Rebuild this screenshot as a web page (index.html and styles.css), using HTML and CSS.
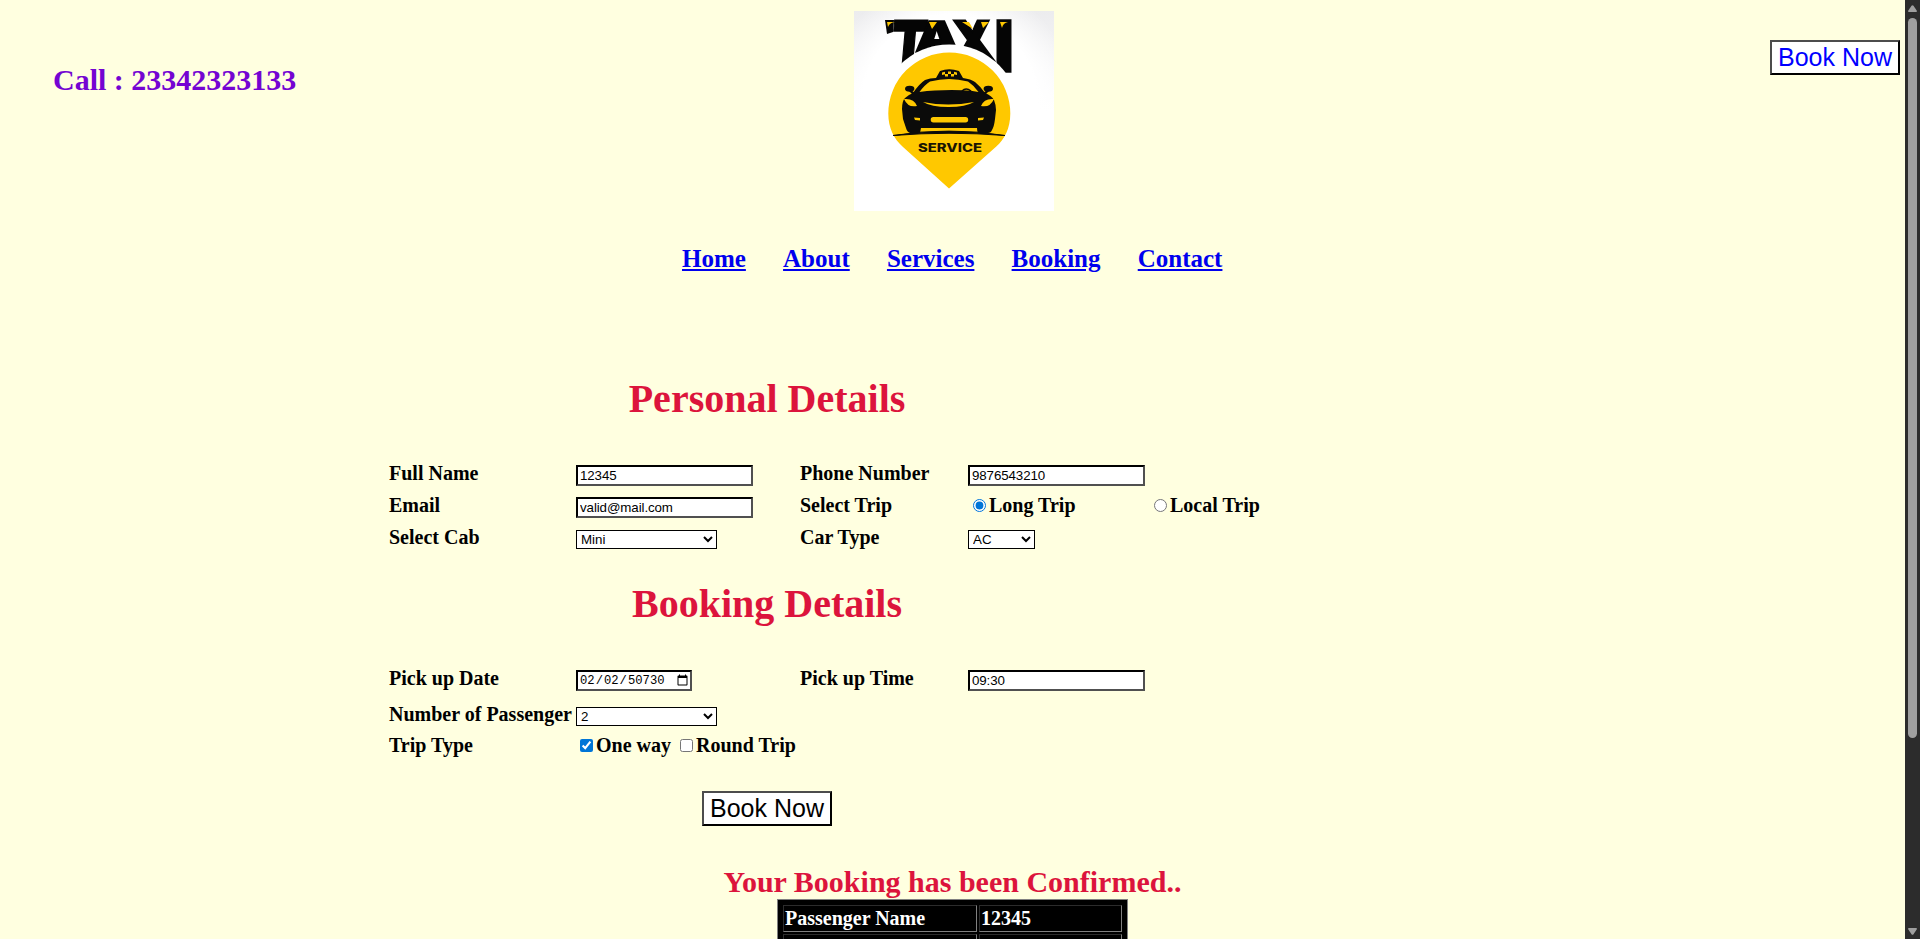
FILE: index.html
```html
<!DOCTYPE html>
<html lang="en-US">
<head>
<meta charset="utf-8">
<title>Taxi Service</title>
<link rel="stylesheet" href="styles.css">
</head>
<body>
<main class="page">
  <header class="header">
    <div class="call">Call : 23342323133</div>
    <svg class="logo" viewBox="0 0 200 200" role="img">
      <defs>
        <linearGradient id="paper" x1="0" y1="0" x2="0" y2="1">
          <stop offset="0" stop-color="#ececee"/>
          <stop offset=".5" stop-color="#fff"/>
        </linearGradient>
        <radialGradient id="glow" cx=".48" cy=".45" r=".62">
          <stop offset=".7" stop-color="#fff"/>
          <stop offset="1" stop-color="#fff" stop-opacity="0"/>
        </radialGradient>
      </defs>
      <rect width="200" height="200" fill="url(#paper)"/>
      <rect width="200" height="200" fill="url(#glow)"/>
      <g class="logo-word">
        <text transform="translate(35 58) skewX(-5)" textLength="36" lengthAdjust="spacingAndGlyphs" font-size="67" stroke-width="3">T</text>
        <text x="61" y="41" textLength="44" lengthAdjust="spacingAndGlyphs" font-size="43">A</text>
        <text transform="translate(101 50) skewX(6)" textLength="41" lengthAdjust="spacingAndGlyphs" font-size="56">X</text>
        <text x="140" y="61" textLength="20" lengthAdjust="spacingAndGlyphs" font-size="71">I</text>
      </g>
      <path d="M31 9h9l-1 12-6 2z" fill="#050505"/>
      <circle cx="95.3" cy="104" r="70.500" fill="#fff"/>
      <g fill="#ffc800">
        <path d="M33 11h9q-6 0-8 5zM75 11h8l-5 7zM108 11h7l4 7zM127 11h8l-6 6zM146 11h8q-5 1-6 6z"/>
        <path d="M95.300 41.500a61 61 0 0 1 61 61c0 15-6 26-14 33L95 177.500 49 136c-9-8-14.700-19-14.700-33.500a61 61 0 0 1 61-61z"/>
      </g>
      <g fill="#0b0b0a">
        <path d="M39 124.500Q95 115.500 151 124.500Q95 120 39 124.500z" stroke="#0b0b0a"/>
        <path d="M82 67l4-7q9-3.500 19 0l4 7q8 1 12 4 5 4 10 11 7 3 9 7 2 5 2 10l-1 9q-1 8-3 11-1 3-4 3h-10q-1-2-1-5H67l-1 5H56q-3-1-4-5l-3-9-1-10q0-8 3-11 3-3 8-5 6-9 12-13 5-2 11-2z"/>
        <ellipse cx="55.700" cy="77.800" rx="4.700" ry="3"/>
        <ellipse cx="134.300" cy="77.800" rx="4.700" ry="3"/>
        <path d="M57 79l4 3-2 2-4-4zM133 79l-4 3 2 2 4-4z"/>
      </g>
      <g fill="#ffc800">
        <path d="M65.500 81q5-7 10.500-10.500 19-5 38 0 6 4 10.500 10.500-7-1.500-16-1.800-24-.8-43 1.800z"/>
        <path d="M50 88q10-1 13 7-9 2-13-7zM140 88q-10-1-13 7 9 2 13-7z"/>
        <path d="M69 91q25 5 51 0-8 5-25.500 5T69 91z"/>
        <rect x="76.700" y="106" width="37.500" height="5.500" rx="2.700"/>
        <path d="M60 106.500l6 .5v2.500l-5-.5zM130 106.500l-6 .5v2.500l5-.5z"/>
        <path d="M67 117h55.500v2.300H67zM88 61.500l3-.8v2.500l-3 .8zM94 60.500h3V63h-3zM100 60.700l3 .8V64l-3-.8zM91 63h3v2.500h-3zM97 63h3v2.500h-3z"/>
      </g>
      <path d="M108 80q4-4 9 0" fill="none" stroke="#0b0b0a" stroke-width="1.500"/>
      <text class="logo-service" x="64" y="141" textLength="64" lengthAdjust="spacingAndGlyphs">SERVICE</text>
    </svg>
    <button class="book book-top">Book Now</button>
  </header>

  <nav class="nav">
    <a href="#">Home</a><a href="#">About</a><a href="#">Services</a><a href="#">Booking</a><a href="#">Contact</a>
  </nav>

  <form class="form">
    <h1 class="title">Personal Details</h1>
    <div class="fields personal">
      <label>Full Name</label><input class="text" type="text" value="12345">
      <label>Phone Number</label><input class="text" type="text" value="9876543210"><span></span>
      <label>Email</label><input class="text" type="text" value="valid@mail.com">
      <label>Select Trip</label>
      <label class="option radio"><input type="radio" name="trip" checked>Long Trip</label>
      <label class="option radio local"><input type="radio" name="trip">Local Trip</label>
      <label>Select Cab</label><select class="wide"><option>Mini</option></select>
      <label>Car Type</label><select class="narrow"><option>AC</option></select><span></span>
    </div>
    <h1 class="title title-booking">Booking Details</h1>
    <div class="fields booking">
      <label>Pick up Date</label><input class="date" type="date" value="50730-02-02">
      <label>Pick up Time</label><input class="text" type="text" value="09:30"><span></span>
      <label>Number of Passenger</label><select class="wide"><option>2</option></select><span></span><span></span><span></span>
      <label>Trip Type</label>
      <div class="checks">
        <label class="option"><input type="checkbox" checked>One way</label>
        <label class="option"><input type="checkbox">Round Trip</label>
      </div>
    </div>
    <button class="book book-form" type="button">Book Now</button>
  </form>

  <section class="result">
    <h2 class="confirmed">Your Booking has been Confirmed..</h2>
    <table class="summary">
      <tr><td class="key">Passenger Name</td><td class="value">12345</td></tr>
      <tr><td class="key">&nbsp;</td><td class="value">&nbsp;</td></tr>
    </table>
  </section>
</main>
<aside class="scrollbar">
  <svg width="9" height="8" viewBox="0 0 9 8"><path d="M3.500.8Q4.500-.5 5.500.8L9 6Q9 7 8 7H1Q0 7 0 6z" fill="#9f9f9f"/></svg>
  <div class="thumb"></div>
  <svg class="down" width="9" height="8" viewBox="0 0 9 8"><path d="M3.500 6.200Q4.500 7.500 5.500 6.200L9 1Q9 0 8 0H1Q0 0 0 1z" fill="#9f9f9f"/></svg>
</aside>
</body>
</html>
```
FILE: styles.css
```css
* { box-sizing: border-box; }

body {
  margin: 0;
  height: 939px;
  display: flex;
  overflow: hidden;
  background: #ffffe0;
  font-family: "Liberation Serif", "Times New Roman", serif;
  font-weight: bold;
}

.page { width: 1905px; height: 939px; overflow: hidden; }

.header {
  display: grid;
  grid-template-columns: 801px 200px 846px;
  padding: 11px 5px 0 53px;
  height: 211px;
  align-items: start;
}
.call { margin-top: 52px; font-size: 30px; line-height: 34px; color: #7404d2; }
.logo { display: block; width: 200px; height: 200px; }
.logo-word text {
  font-family: Inter, "Open Sans", sans-serif;
  font-weight: 900;
  fill: #050505;
  stroke: #050505;
  stroke-width: 1.5;
}
.logo-service { font-family: Inter, sans-serif; font-weight: 800; font-size: 11.5px; fill: #1a1503; }

.book {
  width: 130px;
  height: 35px;
  padding: 1px 6px;
  border: 2px outset #000;
  border-color: #4c4c4c #000 #000 #4c4c4c;
  background: #fff;
  color: #000;
  font: 25px "Liberation Sans", Arial, sans-serif;
  line-height: 29px;
  white-space: nowrap;
}
.book-top { margin-top: 29px; justify-self: end; color: #00f; }

.nav {
  display: flex;
  gap: 37.2px;
  padding: 34px 0 0 682px;
  font-size: 25px;
  line-height: 28px;
}
.nav a { color: #00e; }

.form { padding-left: 389px; }
.title {
  width: 756px;
  margin: 103px 0 0;
  text-align: center;
  font-size: 40px;
  line-height: 46px;
  color: #dc143c;
}
.title-booking { margin-top: 28px; }
.fields {
  display: grid;
  grid-template-columns: 187px 224px 168px 186px 160px;
  font-size: 20px;
  line-height: 32px;
  white-space: nowrap;
  align-items: start;
}
.personal { margin-top: 35px; grid-template-rows: 32px 32px 32px; }
.booking { margin-top: 35px; grid-template-rows: 36px 31px 32px; }

.text, .date {
  width: 177px;
  height: 21px;
  margin: 8px 0 0;
  padding: 1px 2px;
  border: 2px solid #000;
  border-color: #000 #505050 #505050 #000;
  background: #fff;
  color: #000;
  font: 13.333px "Liberation Sans", Arial, sans-serif;
}
.text { letter-spacing: -0.1px; }
.date { width: 116px; padding: 1px; font-family: "Liberation Mono", monospace; font-size: 12.2px; }
.date::-webkit-calendar-picker-indicator { margin-left: 8px; width: 13px; height: 13px; padding: 0; }

select {
  height: 19px;
  margin: 9px 0 0;
  border: 1px solid #000;
  border-radius: 0;
  background: #fff;
  color: #000;
  font: 13.333px "Liberation Sans", Arial, sans-serif;
}
.wide { width: 141px; }
.narrow { width: 67px; }

.option { display: flex; align-items: flex-start; }
.option input { width: 13px; height: 13px; margin: 10px 3px 0 4px; accent-color: #0075d7; }
.option.radio input { margin-left: 5px; }
.option.local input { margin-left: 0; }
.checks { display: flex; gap: 5px; }

.book-form { display: block; margin: 30px 0 0 313px; }

.confirmed {
  margin: 39px 0 0;
  text-align: center;
  font-size: 30px;
  line-height: 34px;
  color: #dc143c;
}
.summary {
  width: 351px;
  margin: 0 auto;
  padding: 3px;
  border: 1px solid #808080;
  border-spacing: 2px;
  background: #000;
  color: #fff;
  font-size: 20px;
  line-height: 23px;
}
.summary td { padding: 1px; height: 27px; border: 1px solid; border-color: #2c2c2c #808080 #808080 #2c2c2c; }
.key { width: 194px; }

.scrollbar {
  width: 15px;
  height: 939px;
  display: flex;
  flex-direction: column;
  align-items: center;
  padding-top: 5px;
  background: #2c2c2c;
}
.thumb { width: 9px; height: 720px; margin-top: 5px; border-radius: 5px; background: #9f9f9f; }
.down { margin-top: 190px; }
```
